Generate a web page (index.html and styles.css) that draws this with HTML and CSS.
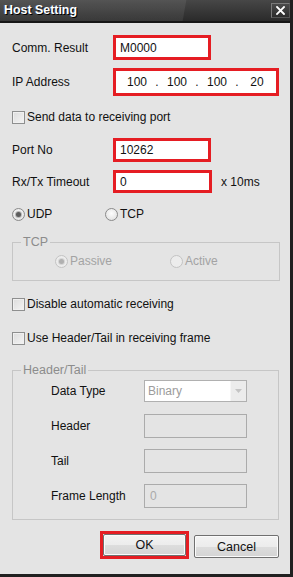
FILE: index.html
```html
<!DOCTYPE html>
<html>
<head>
<meta charset="utf-8">
<link rel="stylesheet" href="styles.css">
</head>
<body>
<div class="window">
  <div class="titlebar">
    <span class="title">Host Setting</span>
    <span class="close"><svg width="9" height="9" viewBox="0 0 9 9"><path d="M1 1L8 8M8 1L1 8" stroke="#fff" stroke-width="1.8" stroke-linecap="square"/></svg></span>
  </div>
  <div class="content">
    <div class="row r-comm">
      <span class="label">Comm. Result</span>
      <div class="field red f-comm">M0000</div>
    </div>
    <div class="row r-ip">
      <span class="label">IP Address</span>
      <div class="field red f-ip">
        <span class="oct">100</span><span class="dot">.</span><span class="oct">100</span><span class="dot">.</span><span class="oct">100</span><span class="dot">.</span><span class="oct">20</span>
      </div>
    </div>
    <label class="check r-send"><span class="box"></span>Send data to receiving port</label>
    <div class="row r-port">
      <span class="label">Port No</span>
      <div class="field red f-port">10262</div>
    </div>
    <div class="row r-time">
      <span class="label">Rx/Tx Timeout</span>
      <div class="field red f-time">0</div>
      <span class="unit">x 10ms</span>
    </div>
    <div class="radios r-proto">
      <span class="radio on udp"><span class="circle"></span>UDP</span>
      <span class="radio tcp"><span class="circle"></span>TCP</span>
    </div>
    <fieldset class="group g-tcp">
      <legend>TCP</legend>
      <div class="radios dis">
        <span class="radio on passive"><span class="circle"></span>Passive</span>
        <span class="radio active"><span class="circle"></span>Active</span>
      </div>
    </fieldset>
    <label class="check r-disable"><span class="box"></span>Disable automatic receiving</label>
    <label class="check r-use"><span class="box"></span>Use Header/Tail in receiving frame</label>
    <fieldset class="group g-ht">
      <legend>Header/Tail</legend>
      <div class="ht-inner">
        <div class="hrow">
          <span class="hlabel">Data Type</span>
          <div class="select"><span class="sval">Binary</span><span class="arrow"><svg width="7" height="4" viewBox="0 0 7 4"><path d="M0 0H7L3.5 4Z" fill="#c4c4c4"/></svg></span></div>
        </div>
        <div class="hrow">
          <span class="hlabel">Header</span>
          <div class="dbox"></div>
        </div>
        <div class="hrow">
          <span class="hlabel">Tail</span>
          <div class="dbox"></div>
        </div>
        <div class="hrow">
          <span class="hlabel">Frame Length</span>
          <div class="dbox">0</div>
        </div>
      </div>
    </fieldset>
    <div class="buttons">
      <div class="redwrap"><button class="btn ok">OK</button></div>
      <button class="btn cancel">Cancel</button>
    </div>
  </div>
</div>
</body>
</html>
```
FILE: styles.css
```css
* { box-sizing: border-box; }
html, body { margin: 0; padding: 0; }
body {
  width: 293px;
  height: 577px;
  overflow: hidden;
  font-family: "Liberation Sans", Arial, sans-serif;
  font-size: 12px;
  color: #111;
  background: #1f1f1f;
}
.window {
  width: 293px;
  height: 577px;
  display: flex;
  flex-direction: column;
  border-right: 3px solid #202020;
  border-bottom: 3px solid #202020;
}
.titlebar {
  height: 23px;
  flex: none;
  display: flex;
  align-items: center;
  justify-content: space-between;
  padding: 0 0 2px 4px;
  border-bottom: 2px solid #161616;
  background:
    linear-gradient(100deg, rgba(255,255,255,0.07) 0, rgba(255,255,255,0.07) 183px, rgba(0,0,0,0) 184px),
    linear-gradient(#474747, #2a2a2a);
}
.title {
  color: #fff;
  font-weight: bold;
  font-size: 12.4px;
  text-shadow: 1px 1px 0 #000, -1px 0 0 rgba(80,120,200,0.4);
  margin-top: 1px;
}
.close {
  width: 19px;
  height: 15px;
  margin-top: 2px;
  display: flex;
  align-items: center;
  justify-content: center;
  border: 1px solid #7a7a7a;
  border-right-color: #555;
  border-bottom-color: #555;
  background: linear-gradient(#4a4a4a, #2c2c2c);
}
.content {
  flex: 1;
  background: #e4e4e4;
  padding: 0 10px 0 12px;
  display: flex;
  flex-direction: column;
}
.row { display: flex; align-items: center; }
.label { width: 101px; flex: none; }
.field {
  background: #fff;
  display: flex;
  align-items: center;
  padding-left: 4px;
}
.red { border: 3px solid #e51d23; }
.r-comm { margin-top: 12px; }
.f-comm { width: 98px; height: 25px; }
.r-ip { margin-top: 8px; }
.f-ip { width: 166px; height: 28px; padding-left: 6px; }
.oct { width: 30px; text-align: center; }
.dot { width: 10px; text-align: center; }
.r-port { margin-top: 12px; }
.f-port { width: 98px; height: 24px; }
.r-time { margin-top: 8px; }
.f-time { width: 99px; height: 23px; }
.unit { margin-left: 9px; }

.check { display: flex; align-items: center; height: 18px; }
.box {
  width: 13px;
  height: 13px;
  margin-right: 2px;
  border: 1px solid #8e8f8f;
  background: linear-gradient(135deg, #dcdcdc, #f4f4f4);
  box-shadow: inset 0 0 0 1px #f0f0f0;
}
.r-send { margin-top: 12px; }
.r-disable { margin-top: 14px; }
.r-use { margin-top: 16px; }

.radios { display: flex; align-items: center; height: 18px; }
.radio { display: flex; align-items: center; }
.circle {
  width: 13px;
  height: 13px;
  border-radius: 50%;
  border: 1px solid #8a8a8a;
  background: radial-gradient(circle at 50% 40%, #fdfdfd, #dcdcdc);
  margin-right: 2px;
  display: flex;
  align-items: center;
  justify-content: center;
}
.radio.on .circle::after {
  content: "";
  width: 5px;
  height: 5px;
  border-radius: 50%;
  background: #5c5c5c;
  box-shadow: 0 0 0 1px #b8b8b8;
}
.r-proto { margin-top: 12px; }
.udp { width: 93px; }
.dis { color: #a3a3a3; height: 24px; padding-left: 42px; margin-bottom: 7px; }
.dis .circle { border-color: #c3c3c3; background: #ececec; }
.dis .radio.on .circle::after { background: #b0b0b0; box-shadow: 0 0 0 1px #d6d6d6; }
.passive { width: 115px; }

.group {
  margin: 0;
  border: 1px solid #c6c6c6;
  padding: 0;
  width: 268px;
}
.group legend {
  margin-left: 8px;
  padding: 0 2px;
  color: #8c8c8c;
  font-size: 12.5px;
  line-height: 14px;
}
.g-tcp { margin-top: 12px; }
.g-ht { margin-top: 16px; width: 267px; }
.ht-inner { padding: 2px 0 11px 38px; display: flex; flex-direction: column; gap: 11px; }
.hrow { display: flex; align-items: center; height: 24px; }
.hlabel { width: 93px; flex: none; }
.select {
  width: 103px;
  height: 22px;
  border: 1px solid #b0b0b0;
  display: flex;
  background: #fff;
}
.sval { flex: 1; color: #9c9c9c; padding-left: 3px; display: flex; align-items: center; }
.arrow { width: 16px; background: #ececec; display: flex; align-items: center; justify-content: center; border-left: 1px solid #f6f6f6; }
.dbox {
  width: 103px;
  height: 24px;
  border: 1px solid #ababab;
  color: #aaa;
  padding-left: 5px;
  display: flex;
  align-items: center;
}

.buttons {
  margin-top: 11px;
  display: flex;
  justify-content: flex-end;
  align-items: flex-start;
  gap: 5px;
  padding-right: 1px;
}
.redwrap { border: 3px solid #e51d23; width: 89px; height: 28px; }
.btn {
  font-family: "Liberation Sans", Arial, sans-serif;
  font-size: 12.5px;
  color: #111;
  border: 1px solid #707070;
  border-radius: 2px;
  background: linear-gradient(#f3f3f3 0, #ececec 50%, #dddddd 51%, #d4d4d4 100%);
  box-shadow: inset 0 0 0 1px #fbfbfb;
  padding: 0;
}
.ok { width: 83px; height: 22px; }
.cancel { width: 85px; height: 23px; margin-top: 4px; }
```
